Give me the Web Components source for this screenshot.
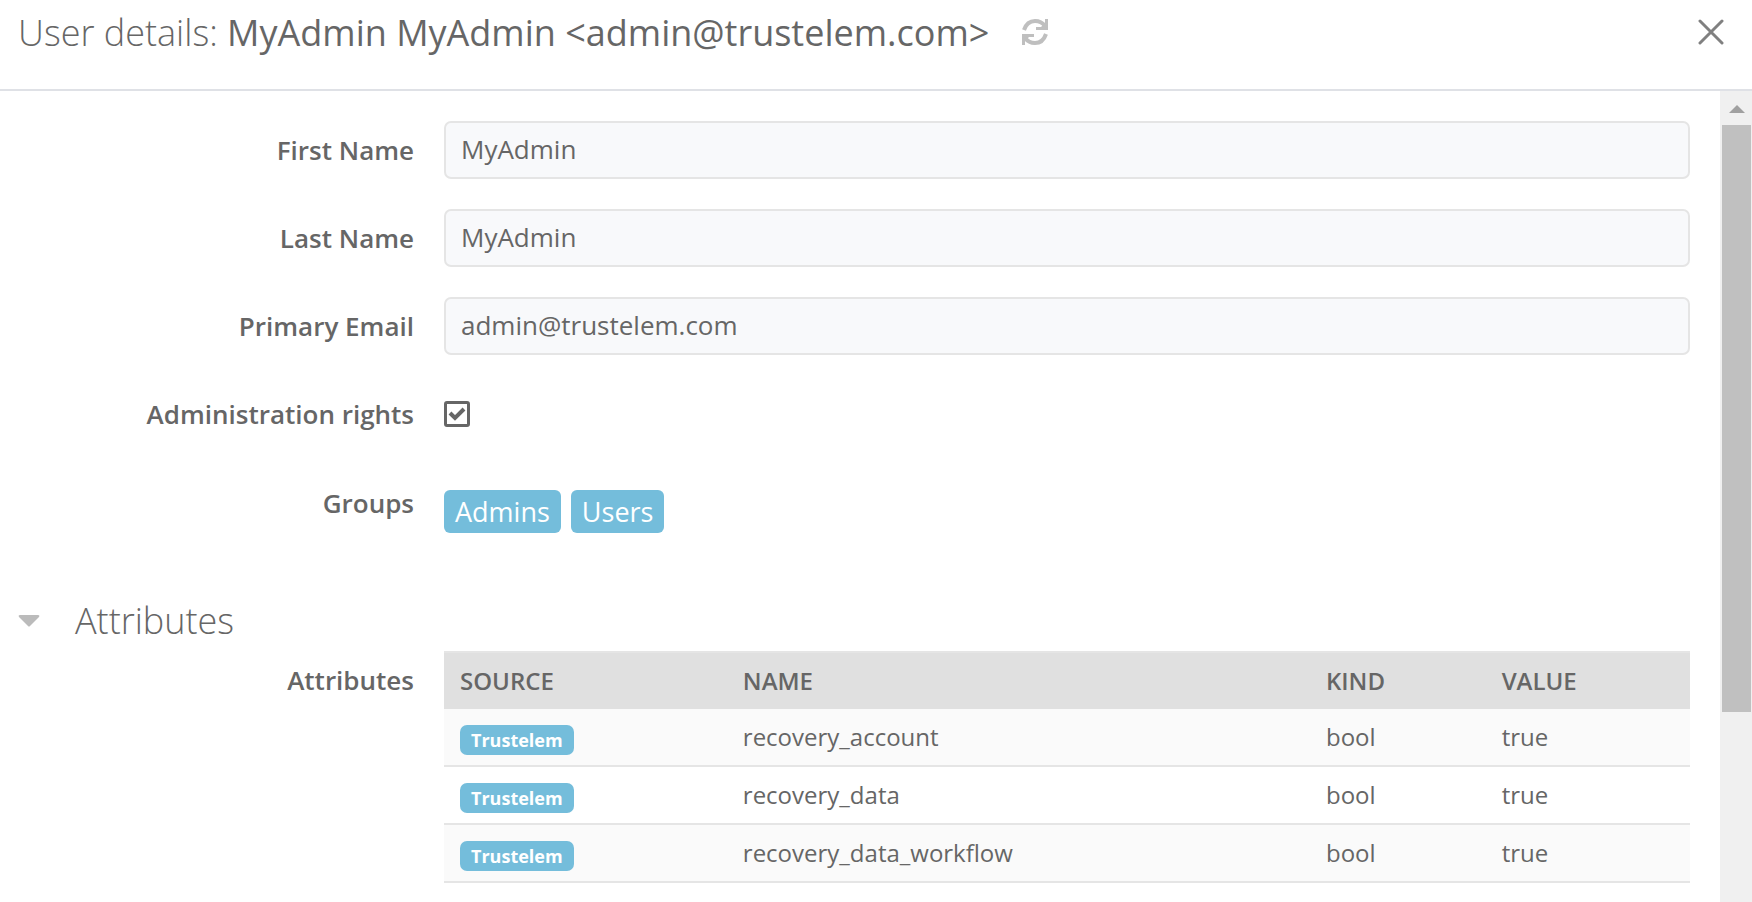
<!DOCTYPE html>
<html lang="en">
<head>
<meta charset="utf-8">
<meta name="viewport" content="width=device-width, initial-scale=1">
<title>User details</title>
<style>
html, body { height: 100%; }
body { margin: 0; overflow: hidden; background: #fff; color: #666; font: 400 26px/40px "Open Sans", sans-serif; }
</style>
</head>
<body>
<user-panel>
  <panel-header slot="header" name="MyAdmin MyAdmin &lt;admin@trustelem.com&gt;">User details:</panel-header>
  <text-field label="First Name" value="MyAdmin"></text-field>
  <text-field label="Last Name" value="MyAdmin"></text-field>
  <text-field label="Primary Email" value="admin@trustelem.com" type="email"></text-field>
  <check-field label="Administration rights" checked></check-field>
  <group-list label="Groups"><tag-badge>Admins</tag-badge><tag-badge>Users</tag-badge></group-list>
  <collapsible-section heading="Attributes"><attribute-table label="Attributes"></attribute-table></collapsible-section>
</user-panel>
<script>
const rowStyle = `
  * { box-sizing: border-box; }
  .row { display: grid; grid-template-columns: minmax(0, 1fr) minmax(0, 3fr); }
  .label { padding: 9px 16px 7px 0; text-align: right; font-weight: 600; }
  .cell { padding: 0 30px 0 14px; }`;

class BaseElement extends HTMLElement {
  connectedCallback() {
    if (this.shadowRoot) return;
    this.attachShadow({ mode: "open" }).innerHTML = this.render();
    this.ready();
  }
  render() { return ""; }
  ready() {}
  text(name) {
    return (this.getAttribute(name) || "").replace(/&/g, "&amp;").replace(/</g, "&lt;").replace(/>/g, "&gt;").replace(/"/g, "&quot;");
  }
}

customElements.define("user-panel", class extends BaseElement {
  render() {
    return `<style>
      :host { display: flex; flex-direction: column; height: 100vh; }
      .body { flex: 1; min-height: 0; display: flex; }
      main { flex: 1; min-width: 0; overflow: hidden; padding-top: 30px; box-sizing: border-box; }
    </style>
    <slot name="header"></slot>
    <div class="body"><main><slot></slot></main><scroll-track></scroll-track></div>`;
  }
});

customElements.define("panel-header", class extends BaseElement {
  render() {
    return `<style>
      :host { display: flex; align-items: flex-start; box-sizing: border-box; padding: 8px 28px 31px 18px; border-bottom: 2px solid #dfe1e6; }
      h1 { margin: 0; font-size: 36px; line-height: 50px; font-weight: 300; }
      strong { font-weight: 400; }
      button { display: flex; align-items: center; height: 48px; margin: 0; padding: 0; border: 0; background: none; cursor: pointer; }
      .refresh { margin-left: 33px; color: #bfbfbf; }
      .close { margin-left: auto; color: #808080; }
    </style>
    <h1><slot></slot> <strong>${this.text("name")}</strong></h1>
    <button class="refresh" type="button" aria-label="Refresh">
      <svg width="26" height="26" viewBox="0 0 26 26" fill="none" stroke="currentColor" stroke-width="4">
        <path d="M2 11C4 5 8 2 13 2c4 0 7 1 10 5M24 15c-2 6-6 9-11 9-4 0-7-1-10-5"/>
        <path fill="currentColor" stroke="none" d="M26 0v11H14V8h5l4-4V0zM0 26V15h12v3H7l-4 4v4z"/>
      </svg></button>
    <button class="close" type="button" aria-label="Close">
      <svg width="26" height="26" viewBox="0 0 26 26" fill="none" stroke="currentColor" stroke-width="3" stroke-linecap="round"><path d="M2 2l22 22M24 2L2 24"/></svg></button>`;
  }
});

customElements.define("scroll-track", class extends BaseElement {
  render() {
    return `<style>
      :host { flex: none; width: 32px; display: flex; flex-direction: column; background: #f0f0f0; }
      .up { height: 34px; display: flex; align-items: center; justify-content: center; padding: 2px 0 0 2px; box-sizing: border-box; }
      .thumb { flex: 34; margin: 0 1px 0 2px; background: #c0c0c0; }
      .rest { flex: 11; }
    </style>
    <div class="up"><svg width="16" height="8" viewBox="0 0 16 8"><path fill="#a0a0a0" d="M8 0l8 8H0z"/></svg></div>
    <div class="thumb"></div><div class="rest"></div>`;
  }
});

customElements.define("text-field", class extends BaseElement {
  render() {
    return `<style>${rowStyle}
      :host { display: block; margin-bottom: 30px; }
      input { display: block; width: 100%; height: 58px; margin: 0; padding: 0 15px 2px; border: 2px solid #e5e5e5; border-radius: 7px; background: #f8f9fb; color: #666; font: inherit; }
    </style>
    <div class="row"><label class="label" for="f">${this.text("label")}</label>
      <div class="cell"><input id="f" type="${this.text("type") || "text"}" value="${this.text("value")}"></div></div>`;
  }
});

customElements.define("check-field", class extends BaseElement {
  render() {
    return `<style>${rowStyle}
      :host { display: block; margin-bottom: 33px; }
      .box { display: grid; width: 26px; height: 26px; margin-top: 16px; }
      input, svg { grid-area: 1 / 1; width: 26px; height: 26px; margin: 0; }
      input { appearance: none; border: 3px solid #666; border-radius: 3px; }
      svg { pointer-events: none; visibility: hidden; }
      input:checked + svg { visibility: visible; }
    </style>
    <div class="row"><label class="label" for="c">${this.text("label")}</label>
      <div class="cell"><div class="box"><input id="c" type="checkbox" ${this.hasAttribute("checked") ? "checked" : ""}>
      <svg viewBox="0 0 26 26" fill="none" stroke="#666" stroke-width="4"><path d="M6 12l5 5 9-9"/></svg></div></div></div>`;
  }
});

customElements.define("tag-badge", class extends BaseElement {
  render() {
    return `<style>
      :host { display: block; padding: 2px 11px 1px; border-radius: 6px; background: #74bddb; color: #fff; font-size: 27px; }
      :host([small]) { display: inline-block; padding: 0 11px; border-radius: 7px; font-size: 18px; line-height: 30px; font-weight: 700; vertical-align: middle; }
    </style><slot></slot>`;
  }
});

customElements.define("group-list", class extends BaseElement {
  render() {
    return `<style>${rowStyle}
      :host { display: block; margin-bottom: 63px; }
      .tags { display: flex; flex-wrap: wrap; gap: 10px; padding-top: 16px; }
    </style>
    <div class="row"><div class="label" id="g">${this.text("label")}</div>
      <div class="cell"><div class="tags" role="group" aria-labelledby="g"><slot></slot></div></div></div>`;
  }
});

customElements.define("collapsible-section", class extends BaseElement {
  render() {
    return `<style>
      :host { display: block; }
      h2 { margin: 0; font-size: 36px; line-height: 50px; font-weight: 300; }
      button { display: flex; align-items: center; gap: 35px; margin: 0; padding: 0 18px 5px; border: 0; background: none; color: inherit; font: inherit; cursor: pointer; }
    </style>
    <h2><button type="button" aria-expanded="true">
      <svg width="22" height="12" viewBox="0 0 22 12"><path fill="#bbb" d="M2 0h18q2 0 1 2l-9 9q-1 1-2 0L1 2Q0 0 2 0z"/></svg>${this.text("heading")}</button></h2>
    <div class="content"><slot></slot></div>`;
  }
  ready() {
    const button = this.shadowRoot.querySelector("button");
    button.addEventListener("click", () => {
      const content = this.shadowRoot.querySelector(".content");
      content.hidden = !content.hidden;
      button.setAttribute("aria-expanded", String(!content.hidden));
    });
  }
});

customElements.define("attribute-table", class extends BaseElement {
  render() {
    const rows = ["recovery_account", "recovery_data", "recovery_data_workflow"];
    return `<style>${rowStyle}
      :host { display: block; }
      table { width: 100%; table-layout: fixed; border-collapse: separate; border-spacing: 0; font-size: 24px; line-height: 40px; text-align: left; }
      th, td { height: 58px; padding: 0 16px; }
      th { background: #e0e0e0; border-top: 2px solid #e5e5e5; font-weight: 600; }
      td { border-bottom: 2px solid #e5e5e5; }
      tbody tr:nth-child(odd) { background: #fafafa; }
      th:nth-child(1) { width: 22.7%; }
      th:nth-child(2) { width: 46.8%; }
      th:nth-child(3) { width: 14.1%; }
    </style>
    <div class="row"><div class="label" id="t">${this.text("label")}</div>
      <div class="cell"><table aria-labelledby="t">
        <thead><tr><th>SOURCE</th><th>NAME</th><th>KIND</th><th>VALUE</th></tr></thead>
        <tbody>${rows.map(r => `<tr><td><tag-badge small>Trustelem</tag-badge></td><td>${r}</td><td>bool</td><td>true</td></tr>`).join("")}</tbody>
      </table></div></div>`;
  }
});
</script>
</body>
</html>
